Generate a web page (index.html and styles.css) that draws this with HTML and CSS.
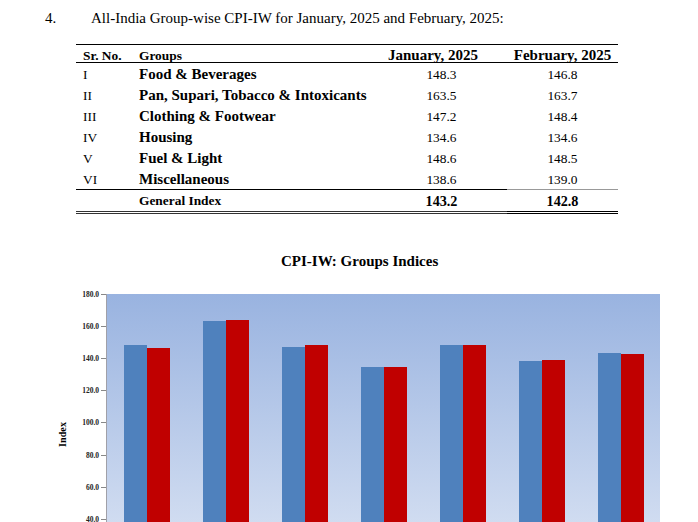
FILE: index.html
```html
<!DOCTYPE html>
<html lang="en">
<head>
<meta charset="utf-8">
<title>CPI-IW Group-wise</title>
<link rel="stylesheet" href="styles.css">
</head>
<body>
<div class="heading">
  <span class="num">4.</span>
  <span class="htext">All-India Group-wise CPI-IW for January, 2025 and February, 2025:</span>
</div>

<table class="cpi">
  <colgroup>
    <col class="c-sr"><col class="c-grp"><col class="c-jan"><col class="c-feb">
  </colgroup>
  <thead>
    <tr>
      <th class="sr">Sr. No.</th>
      <th class="grp">Groups</th>
      <th class="jan">January, 2025</th>
      <th class="feb">February, 2025</th>
    </tr>
  </thead>
  <tbody>
    <tr><td class="sr">I</td><td class="grp">Food &amp; Beverages</td><td class="val">148.3</td><td class="val">146.8</td></tr>
    <tr><td class="sr">II</td><td class="grp">Pan, Supari, Tobacco &amp; Intoxicants</td><td class="val">163.5</td><td class="val">163.7</td></tr>
    <tr><td class="sr">III</td><td class="grp">Clothing &amp; Footwear</td><td class="val">147.2</td><td class="val">148.4</td></tr>
    <tr><td class="sr">IV</td><td class="grp">Housing</td><td class="val">134.6</td><td class="val">134.6</td></tr>
    <tr><td class="sr">V</td><td class="grp">Fuel &amp; Light</td><td class="val">148.6</td><td class="val">148.5</td></tr>
    <tr><td class="sr">VI</td><td class="grp">Miscellaneous</td><td class="val">138.6</td><td class="val">139.0</td></tr>
    <tr class="total"><td class="sr"></td><td class="grp gi">General Index</td><td class="val tv">143.2</td><td class="val tv last">142.8</td></tr>
  </tbody>
</table>

<div class="chart-title">CPI-IW: Groups Indices</div>

<div class="chart">
  <div class="ylabel"><span>Index</span></div>
  <div class="yaxis">
    <div class="tick"><span>180.0</span></div>
    <div class="tick"><span>160.0</span></div>
    <div class="tick"><span>140.0</span></div>
    <div class="tick"><span>120.0</span></div>
    <div class="tick"><span>100.0</span></div>
    <div class="tick"><span>80.0</span></div>
    <div class="tick"><span>60.0</span></div>
    <div class="tick"><span>40.0</span></div>
    <div class="tick"><span>20.0</span></div>
    <div class="tick"><span>0.0</span></div>
  </div>
  <div class="plot">
    <div class="group"><div class="bar jan" style="height:238.9px"></div><div class="bar feb" style="height:236.5px"></div></div>
    <div class="group"><div class="bar jan" style="height:263.4px"></div><div class="bar feb" style="height:263.7px"></div></div>
    <div class="group"><div class="bar jan" style="height:237.2px"></div><div class="bar feb" style="height:239.1px"></div></div>
    <div class="group"><div class="bar jan" style="height:216.9px"></div><div class="bar feb" style="height:216.9px"></div></div>
    <div class="group"><div class="bar jan" style="height:239.4px"></div><div class="bar feb" style="height:239.3px"></div></div>
    <div class="group"><div class="bar jan" style="height:223.3px"></div><div class="bar feb" style="height:223.9px"></div></div>
    <div class="group"><div class="bar jan" style="height:230.7px"></div><div class="bar feb" style="height:230.1px"></div></div>
  </div>
</div>
</body>
</html>
```

FILE: styles.css
```css
html {
  overflow: hidden;
}
body {
  margin: 0;
  font-family: "Liberation Serif", "Times New Roman", serif;
  color: #000;
  background: #fff;
}

.heading {
  display: flex;
  padding: 10px 0 0 45px;
  font-size: 15px;
  line-height: 17px;
}
.heading .num {
  width: 46px;
}

.cpi {
  border-collapse: collapse;
  margin: 17px 0 0 76px;
  width: 542px;
  table-layout: fixed;
}
.c-sr { width: 63px; }
.c-grp { width: 237px; }
.c-jan { width: 131px; }
.c-feb { width: 111px; }

.cpi th {
  height: 17px;
  padding: 0;
  font-weight: bold;
  border-top: 1px solid #000;
  border-bottom: 1px solid #000;
  line-height: 13px;
  vertical-align: bottom;
}
.cpi th.sr,
.cpi th.grp {
  font-size: 13.4px;
  text-align: left;
}
.cpi th.sr { padding-left: 7px; }
.cpi th.jan {
  font-size: 15px;
  text-align: right;
  padding-right: 29px;
}
.cpi th.feb {
  font-size: 15px;
  text-align: center;
}

.cpi td {
  height: 19px;
  padding: 2px 0 0;
  vertical-align: middle;
}
.cpi td.sr {
  font-size: 13.4px;
  padding-left: 7px;
}
.cpi td.grp {
  font-size: 15px;
  font-weight: bold;
}
.cpi td.val {
  font-size: 13.4px;
  text-align: center;
}
.cpi tr.total td {
  height: 20px;
  padding-top: 1px;
  border-top: 1px solid #000;
  border-bottom: 3px double #333;
}
.cpi tr.total td.last {
  border-top-color: #999;
  border-bottom-color: #000;
}
.cpi td.gi {
  font-size: 13.4px;
}
.cpi td.tv {
  font-size: 14.2px;
  font-weight: bold;
}

.chart-title {
  margin-top: 39px;
  padding-left: 281px;
  font-size: 15px;
  line-height: 17px;
  font-weight: bold;
}

.chart {
  display: flex;
  margin-top: 24px;
}
.ylabel {
  width: 68px;
  display: flex;
  align-items: center;
  justify-content: flex-end;
  padding-bottom: 10px;
  box-sizing: border-box;
}
.ylabel span {
  writing-mode: vertical-rl;
  transform: rotate(180deg);
  font-size: 10.2px;
  font-weight: bold;
  line-height: 10px;
}
.yaxis {
  width: 38px;
  height: 290px;
  display: flex;
  flex-direction: column;
  justify-content: space-between;
}
.tick {
  height: 0;
  display: flex;
  align-items: center;
  justify-content: flex-end;
  font-size: 7.5px;
  font-weight: bold;
  color: #222;
}
.tick::after {
  content: "";
  width: 5px;
  height: 1px;
  margin-left: 2px;
  background: #888;
}
.plot {
  width: 553px;
  height: 290px;
  border-left: 1px solid #a0a0a8;
  background: linear-gradient(#99b3e0, #dfe7f5);
  display: flex;
  align-items: flex-end;
}
.group {
  flex: 1;
  display: flex;
  justify-content: center;
  align-items: flex-end;
  height: 100%;
}
.bar {
  width: 23px;
}
.bar.jan {
  background: #4f81bd;
}
.bar.feb {
  background: #c00000;
}
```
